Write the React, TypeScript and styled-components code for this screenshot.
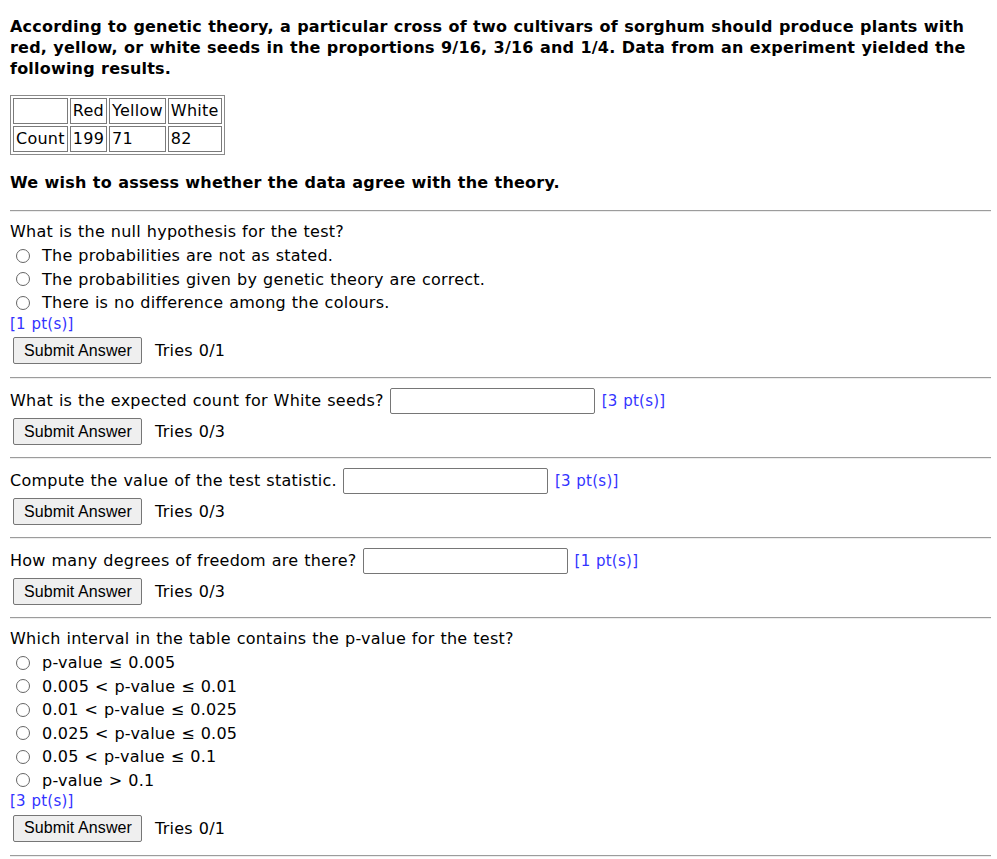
import React from "react";
import styled, { createGlobalStyle } from "styled-components";

const GlobalStyle = createGlobalStyle`
  html, body {
    margin: 0;
    padding: 0;
    background: #ffffff;
  }
  body {
    font-family: "DejaVu Sans", Verdana, sans-serif;
    font-size: 16px;
    color: #000000;
    word-spacing: 0.5px;
    letter-spacing: 0.25px;
  }
`;

const Page = styled.div`
  padding: 16px 6px 0 10px;
`;

const Intro = styled.p`
  margin: 0;
  font-weight: bold;
  line-height: 21px;
  letter-spacing: 0.2px;
`;

const CountTable = styled.table`
  margin-top: 16px;
  border: 1px solid #8a8a8a;
  border-collapse: separate;
  border-spacing: 2px;
`;

const Cell = styled.td`
  border: 1px solid #7a7a7a;
  padding: 2px;
  line-height: 20px;
  height: 20px;
  text-align: left;
  vertical-align: middle;
`;

const Aim = styled.p`
  margin: 17px 0 0;
  font-weight: bold;
  line-height: 21px;
  letter-spacing: 0.2px;
`;

const Divider = styled.hr<{ $top?: number }>`
  margin: ${(p) => p.$top ?? 0}px 0 0;
  height: 0;
  border: none;
  border-top: 1px solid #9c9c9c;
  border-bottom: 1px solid #ededed;
`;

const Section = styled.div<{ $bottom: number }>`
  display: flex;
  flex-direction: column;
  align-items: flex-start;
  padding: 8px 0 ${(p) => p.$bottom}px;
`;

const Question = styled.div`
  line-height: 24px;
`;

const Choice = styled.label`
  display: flex;
  align-items: center;
  height: 23.5px;
  gap: 12px;
  padding-left: 6px;
`;

const Radio = styled.input.attrs({ type: "radio" })`
  appearance: none;
  margin: 0;
  width: 14px;
  height: 14px;
  border: 1px solid #666666;
  border-radius: 50%;
  background: #ffffff;
  box-sizing: border-box;
`;

const Points = styled.span<{ $gap?: number }>`
  color: #3333ff;
  font-size: 15px;
  line-height: 18px;
  margin-left: ${(p) => p.$gap ?? 0}px;
`;

const AnswerRow = styled.div`
  display: flex;
  align-items: center;
  height: 27px;
  gap: 6px;
`;

const AnswerBox = styled.input.attrs({ type: "text" })`
  width: 205px;
  height: 26px;
  margin: 0;
  padding: 1px 4px;
  box-sizing: border-box;
  border: 1px solid #767676;
  border-radius: 2px;
  font-size: 16px;
  background: #ffffff;
`;

const SubmitRow = styled.div<{ $top: number }>`
  display: flex;
  align-items: center;
  gap: 13px;
  margin-top: ${(p) => p.$top}px;
  padding-left: 3px;
`;

const SubmitButton = styled.button`
  height: 27px;
  margin: 0;
  padding: 0 9px 0 10px;
  font-family: "Liberation Sans", Arial, sans-serif;
  font-size: 16px;
  letter-spacing: 0.1px;
  word-spacing: 0;
  color: #000000;
  background: #efefef;
  border: 1px solid #767676;
  border-radius: 2px;
`;

const Tries = styled.span`
  line-height: 27px;
`;

const Footer = styled.div`
  margin: 2px -6px 0 -10px;
  height: 40px;
  background: #2e2e2e;
`;

type ChoiceQ = { kind: "choice"; text: string; options: string[]; pts: number; tries: string };
type InputQ = { kind: "input"; text: string; pts: number; tries: string };

const questions: (ChoiceQ | InputQ)[] = [
  {
    kind: "choice",
    text: "What is the null hypothesis for the test?",
    options: [
      "The probabilities are not as stated.",
      "The probabilities given by genetic theory are correct.",
      "There is no difference among the colours.",
    ],
    pts: 1,
    tries: "0/1",
  },
  { kind: "input", text: "What is the expected count for White seeds?", pts: 3, tries: "0/3" },
  { kind: "input", text: "Compute the value of the test statistic.", pts: 3, tries: "0/3" },
  { kind: "input", text: "How many degrees of freedom are there?", pts: 1, tries: "0/3" },
  {
    kind: "choice",
    text: "Which interval in the table contains the p-value for the test?",
    options: [
      "p-value \u2264 0.005",
      "0.005 < p-value \u2264 0.01",
      "0.01 < p-value \u2264 0.025",
      "0.025 < p-value \u2264 0.05",
      "0.05 < p-value \u2264 0.1",
      "p-value > 0.1",
    ],
    pts: 3,
    tries: "0/1",
  },
];

const Submit: React.FC<{ tries: string; top: number }> = ({ tries, top }) => (
  <SubmitRow $top={top}>
    <SubmitButton type="button">Submit Answer</SubmitButton>
    <Tries>Tries {tries}</Tries>
  </SubmitRow>
);

export default function App() {
  return (
    <>
      <GlobalStyle />
      <Page>
        <Intro>
          According to genetic theory, a particular cross of two cultivars of sorghum should produce plants with
          red, yellow, or white seeds in the proportions 9/16, 3/16 and 1/4. Data from an experiment yielded the
          following results.
        </Intro>

        <CountTable>
          <tbody>
            <tr>
              <Cell />
              <Cell>Red</Cell>
              <Cell>Yellow</Cell>
              <Cell>White</Cell>
            </tr>
            <tr>
              <Cell>Count</Cell>
              <Cell>199</Cell>
              <Cell>71</Cell>
              <Cell>82</Cell>
            </tr>
          </tbody>
        </CountTable>

        <Aim>We wish to assess whether the data agree with the theory.</Aim>

        <Divider $top={17} />
        {questions.map((q, i) => (
          <React.Fragment key={i}>
            {q.kind === "choice" ? (
              <Section $bottom={13}>
                <Question>{q.text}</Question>
                {q.options.map((opt) => (
                  <Choice key={opt}>
                    <Radio name={`q${i}`} />
                    <span>{opt}</span>
                  </Choice>
                ))}
                <Points>[{q.pts} pt(s)]</Points>
                <Submit tries={q.tries} top={4.5} />
              </Section>
            ) : (
              <Section $bottom={12}>
                <AnswerRow>
                  <span>{q.text}</span>
                  <AnswerBox />
                  <Points $gap={1}>[{q.pts} pt(s)]</Points>
                </AnswerRow>
                <Submit tries={q.tries} top={4} />
              </Section>
            )}
            <Divider />
          </React.Fragment>
        ))}
        <Footer />
      </Page>
    </>
  );
}
